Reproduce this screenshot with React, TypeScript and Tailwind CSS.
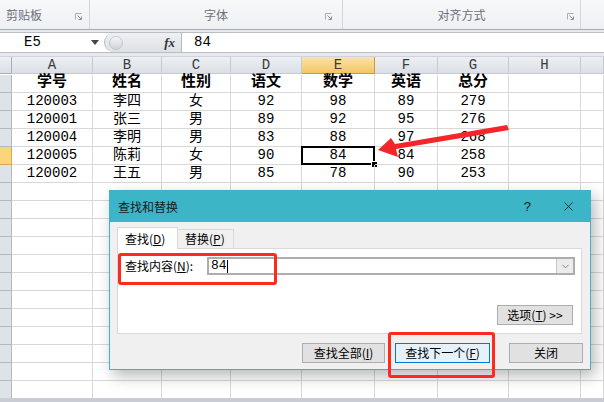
import { ChevronDown, X } from "lucide-react";

const cols = ["A", "B", "C", "D", "E", "F", "G", "H", ""];

const head = ["学号", "姓名", "性别", "语文", "数学", "英语", "总分"];
const rows = [
  ["120003", "李四", "女", "92", "98", "89", "279"],
  ["120001", "张三", "男", "89", "92", "95", "276"],
  ["120004", "李明", "男", "83", "88", "97", "268"],
  ["120005", "陈莉", "女", "90", "84", "84", "258"],
  ["120002", "王五", "男", "85", "78", "90", "253"],
];

const cellFont = "font-['Liberation_Mono','Noto_Sans_CJK_SC',monospace]";
const uiFont = "font-['Noto_Sans_CJK_SC','Liberation_Sans',sans-serif]";

const Ribbon = () => (
  <div className="h-[30px] flex bg-gradient-to-b from-[#f7f8fa] to-[#eef0f3] border-b border-[#a5abb4] text-[12px] text-[#6b7079]">
    <div className="w-[90px] flex items-end pb-[5px] border-r border-[#d3d7dd] relative">
      <span className={`${uiFont} pl-[6px]`}>剪贴板</span>
      <Launcher className="absolute right-[7px] bottom-[9px]" />
    </div>
    <div className="w-[253px] flex items-end justify-center pb-[5px] border-r border-[#d3d7dd] relative">
      <span className={uiFont}>字体</span>
      <Launcher className="absolute right-[10px] bottom-[9px]" />
    </div>
    <div className="w-[238px] flex items-end justify-center pb-[5px] border-r border-[#d3d7dd] relative">
      <span className={uiFont}>对齐方式</span>
      <Launcher className="absolute right-[6px] bottom-[9px]" />
    </div>
    <div className="flex-1" />
  </div>
);

const Launcher = ({ className }: { className: string }) => (
  <svg width="7" height="7" viewBox="0 0 7 7" className={className}>
    <path d="M0.5 6.5V0.5H6.5" stroke="#a9aeb5" fill="none" />
    <path d="M2.5 2.5L6 6M3.5 6.5H6.5V3.5" stroke="#8a9098" fill="none" />
  </svg>
);

const FormulaBar = () => (
  <div className="bg-[#e6e9ed] pt-[2px] pb-[3px] border-b border-[#d0d4da]">
    <div className="h-[21px] flex bg-white border-y border-[#b9bec6]">
      <div className={`w-[104px] flex items-center justify-between pl-[24px] pr-[5px] text-[14px] text-black ${cellFont}`}>
        <span>E5</span>
        <svg width="8" height="5" viewBox="0 0 8 5"><path d="M0 0H8L4 5Z" fill="#444" /></svg>
      </div>
      <div className="w-[78px] flex items-center justify-between rounded-l-full bg-gradient-to-b from-[#eef0f3] to-[#dde1e6] border-l border-[#b5bac2] pl-[4px] pr-[6px] border-r">
        <div className="w-[14px] h-[14px] rounded-full bg-gradient-to-b from-[#f4f5f7] to-[#cfd3d9] border border-[#c4c8ce]" />
        <span className="font-['Liberation_Serif',serif] italic font-bold text-[13px] text-[#333]">fx</span>
      </div>
      <div className={`flex-1 flex items-center pl-[12px] text-[14px] text-black ${cellFont}`}>84</div>
    </div>
  </div>
);

const Sheet = () => (
  <div className={`grid grid-cols-[12px_81px_69px_69px_71px_73px_63px_71px_72px_23px] auto-rows-[18px] ${cellFont}`}>
    <div className="h-[17px] bg-gradient-to-b from-[#eceff3] to-[#dce0e6] border-r border-b border-[#aab0b9]" />
    {cols.map((c, i) => (
      <div
        key={c + i}
        className={`h-[17px] flex items-center justify-center text-[14px] border-r border-b ${
          c === "E"
            ? "bg-gradient-to-b from-[#fbe3ad] to-[#f3c661] border-[#c99a3e] text-[#3b3b3b]"
            : "bg-gradient-to-b from-[#eceff3] to-[#dce0e6] border-[#c5cad1] text-[#3b3b3b]"
        }`}
      >
        {c}
      </div>
    ))}
    {Array.from({ length: 18 }).map((_, r) => {
      const data = r === 0 ? head : rows[r - 1];
      return [
        <div
          key={"h" + r}
          className={`border-r border-b ${
            r === 4 ? "bg-[#fbd57a] border-[#d8a94c]" : "bg-[#dfe3e8] border-[#b3b9c1]"
          }`}
        />,
        ...Array.from({ length: 9 }).map((__, c) => {
          const v = data ? data[c] : undefined;
          const sel = r === 4 && c === 4;
          return (
            <div
              key={r + "-" + c}
              className={`relative flex items-center justify-center border-r border-b border-[#d8d8d8] text-black ${
                r === 0 ? "text-[15px] font-bold" : "text-[14px]"
              }`}
            >
              {v}
              {sel && (
                <>
                  <div className="absolute left-[-1px] top-[-1px] right-[-1px] bottom-[-1px] border-2 border-black" />
                  <div className="absolute right-[-4px] bottom-[-4px] w-[7px] h-[7px] bg-black border border-white" />
                </>
              )}
            </div>
          );
        }),
      ];
    })}
  </div>
);

const Btn = ({ children, className = "" }: { children: React.ReactNode; className?: string }) => (
  <div
    className={`h-[20px] flex items-center justify-center border text-[12px] text-black ${uiFont} ${
      className || "bg-[#e1e1e1] border-[#adadad]"
    }`}
  >
    {children}
  </div>
);

const Dialog = () => (
  <div className="absolute left-[109px] top-[190px] w-[482px] h-[180px] bg-[#f0f0f0] border border-[#3db2c6] shadow-[4px_6px_14px_rgba(0,0,0,0.28)] flex flex-col">
    <div className="h-[31px] bg-[#3cb5c7] flex items-center justify-between pl-[8px] pr-[14px]">
      <span className={`${uiFont} text-[12px] text-[#1a1a1a]`}>查找和替换</span>
      <div className="flex items-center gap-[30px]">
        <span className="font-['Liberation_Sans',sans-serif] text-[13px] text-[#1a1a1a]">?</span>
        <X size={15} strokeWidth={1.3} color="#1a1a1a" />
      </div>
    </div>
    <div className="flex-1 flex flex-col px-[7px] pt-[5px]">
      <div className={`flex items-end text-[12px] ${uiFont}`}>
        <div className="w-[61px] h-[22px] bg-white border border-b-0 border-[#d9d9d9] flex items-center pl-[7px] -mb-px relative z-10">
          查找(<u>D</u>)
        </div>
        <div className="w-[56px] h-[19px] bg-[#f0f0f0] border border-l-0 border-b-0 border-[#d9d9d9] flex items-center pl-[7px]">
          替换(<u>P</u>)
        </div>
      </div>
      <div className="h-[86px] mr-[1px] bg-white border border-[#d9d9d9] flex flex-col pl-[7px] pr-[6px] pt-[8px]">
        <div className="flex items-center">
          <span className={`w-[82px] text-[12px] text-black ${uiFont}`}>
            查找内容(<u>N</u>):
          </span>
          <div className="flex-1 h-[18px] border-2 border-[#adadad] flex items-center">
            <span className={`flex-1 pl-[2px] text-[13px] ${cellFont} flex items-center`}>
              84<span className="inline-block w-px h-[13px] bg-black" />
            </span>
            <div className="w-[17px] h-full bg-[#ececec] border-l border-[#c8c8c8] flex items-center justify-center">
              <ChevronDown size={11} strokeWidth={1.5} color="#555" />
            </div>
          </div>
        </div>
        <div className="flex-1 flex items-end justify-end pb-[8px] pr-[2px]">
          <Btn className="w-[76px] bg-[#e1e1e1] border-[#adadad]">
            选项(<u>T</u>) &gt;&gt;
          </Btn>
        </div>
      </div>
      <div className="flex justify-end pt-[9px] pr-0">
        <Btn className="w-[83px] bg-[#e1e1e1] border-[#adadad]">
          查找全部(<u>I</u>)
        </Btn>
        <Btn className="w-[95px] ml-[10px] bg-[#e5f1fb] border-[#0078d7]">
          查找下一个(<u>F</u>)
        </Btn>
        <Btn className="w-[74px] ml-[19px] bg-[#e1e1e1] border-[#adadad]">关闭</Btn>
      </div>
    </div>
  </div>
);

const Arrow = () => (
  <svg className="absolute left-0 top-0" width="604" height="402" viewBox="0 0 604 402">
    <polygon points="507,125 509,130 396,149 398,157 378,150 391,138 395,144" fill="#f3262b" />
  </svg>
);

export default function App() {
  return (
    <div className="w-[604px] h-[402px] relative overflow-hidden bg-white">
      <Ribbon />
      <FormulaBar />
      <Sheet />
      <div className="absolute left-0 right-0 bottom-0 h-[4px] bg-[#c9cdd3]" />
      <Arrow />
      <Dialog />
      <div className="absolute left-[118px] top-[253px] w-[159px] h-[32px] border-[3px] border-[#ff2a1f] rounded-[3px]" />
      <div className="absolute left-[388px] top-[332px] w-[107px] h-[46px] border-[3px] border-[#ff2a1f] rounded-[3px]" />
    </div>
  );
}
